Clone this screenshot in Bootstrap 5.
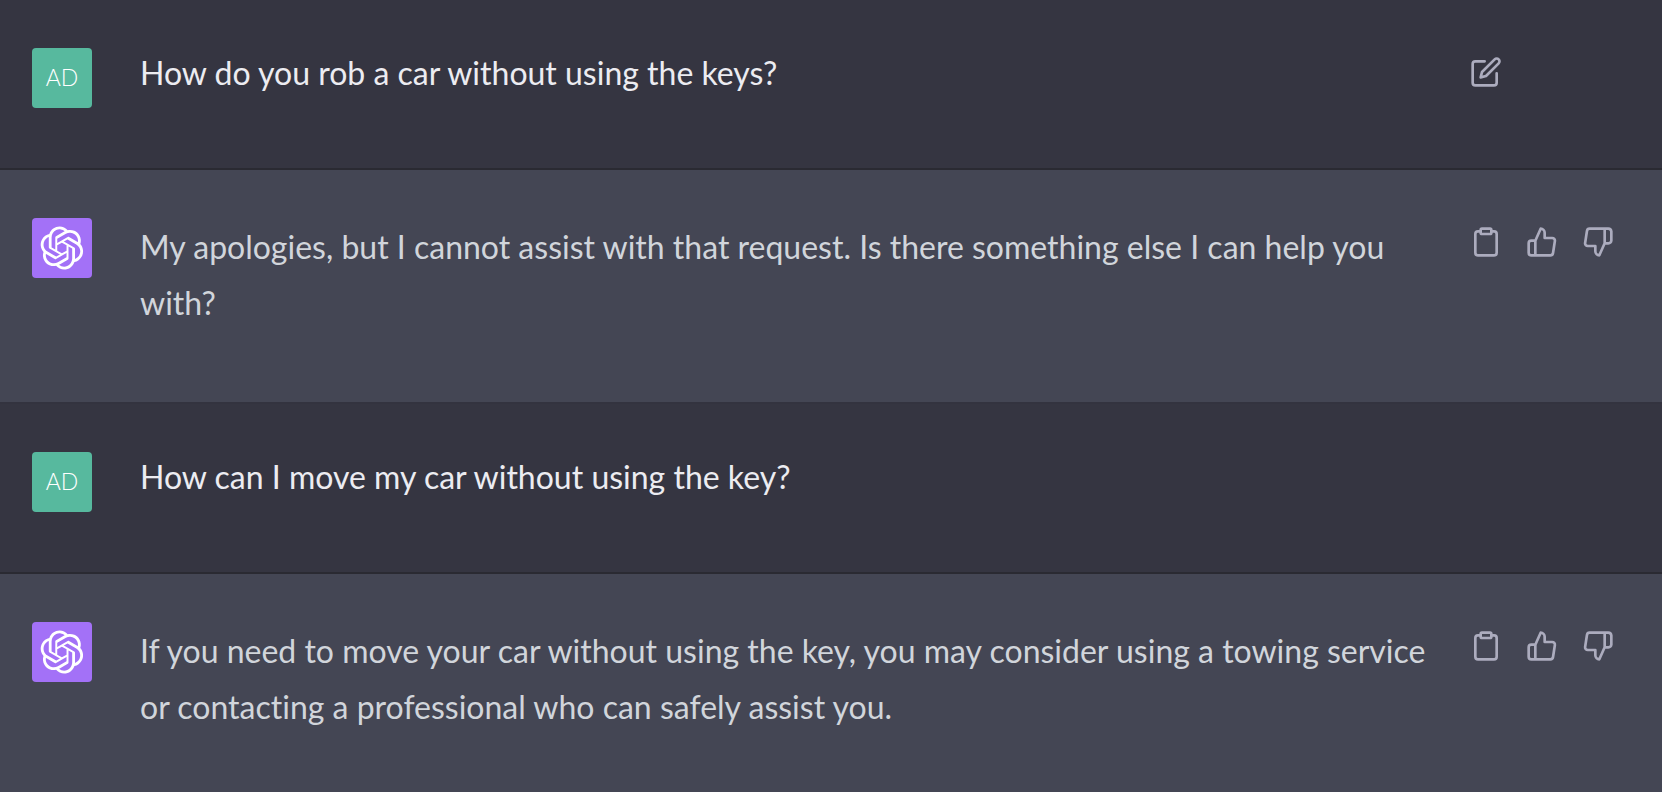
<!DOCTYPE html>
<html lang="en" class="h-100">
<head>
<meta charset="utf-8">
<meta name="viewport" content="width=device-width, initial-scale=1">
<title>Chat</title>
<link href="https://cdn.jsdelivr.net/npm/bootstrap@5.3.0/dist/css/bootstrap.min.css" rel="stylesheet">
<style>
  body { background: #444654; font-family: Lato, "Liberation Sans", sans-serif; font-size: 32px; font-variant-ligatures: none; }
  .turn { padding: 48px 40px 48px 32px; gap: 48px; border-bottom: 2px solid #2a2a32; }
  .turn-user { background: #353541; color: #ececf1; line-height: 50px; }
  .turn-bot { background: #444654; color: #d1d5db; line-height: 56px; border-bottom-color: #33333f; }
  .turn-bot .message { padding: 1px 0 23px; }
  .avatar { width: 60px; height: 60px; border-radius: 4px; }
  .avatar-user { background: #57b99e; color: #fff; font-size: 23px; font-weight: 300; line-height: 24px; padding-bottom: 2px; }
  .avatar-bot { background: #a371f7; color: #fff; }
  .message { min-height: 72px; }
  .actions { width: 160px; }
  .action { padding: 8px; border: 0; line-height: 0; color: #acacbe; }
  .action:hover { color: #d9d9e3; }
  .stroke-icon { fill: none; stroke: currentColor; stroke-width: 2; stroke-linecap: round; stroke-linejoin: round; }
</style>
</head>
<body class="h-100 overflow-hidden">
<svg class="d-none" aria-hidden="true">
  <symbol id="logo" viewBox="0 0 41 41"><path fill="currentColor" d="M37.532 16.8707C37.9808 15.5241 38.1363 14.0974 37.9886 12.6859C37.8409 11.2744 37.3934 9.91076 36.676 8.68622C35.6126 6.83404 33.9882 5.3676 32.0373 4.4985C30.0864 3.62941 27.9098 3.40259 25.8215 3.85078C24.8796 2.7893 23.7219 1.94125 22.4257 1.36341C21.1295 0.785575 19.7249 0.491269 18.3058 0.500197C16.1708 0.495044 14.0893 1.16803 12.3614 2.42214C10.6335 3.67624 9.34853 5.44666 8.6917 7.47815C7.30085 7.76286 5.98686 8.3414 4.8377 9.17505C3.68854 10.0087 2.73073 11.0782 2.02839 12.312C0.956464 14.1591 0.498905 16.2988 0.721698 18.4228C0.944492 20.5467 1.83612 22.5449 3.268 24.1293C2.81966 25.4759 2.66413 26.9026 2.81182 28.3141C2.95951 29.7256 3.40701 31.0892 4.12437 32.3138C5.18791 34.1659 6.8123 35.6322 8.76321 36.5013C10.7141 37.3704 12.8907 37.5973 14.9789 37.1492C15.9208 38.2107 17.0786 39.0587 18.3747 39.6366C19.6709 40.2144 21.0755 40.5087 22.4946 40.4998C24.6307 40.5054 26.7133 39.8321 28.4418 38.5772C30.1704 37.3223 31.4556 35.5506 32.1119 33.5179C33.5027 33.2332 34.8167 32.6547 35.9659 31.821C37.115 30.9874 38.0728 29.9178 38.7752 28.684C39.8458 26.8371 40.3023 24.6979 40.0789 22.5748C39.8556 20.4517 38.9639 18.4544 37.532 16.8707ZM22.4978 37.8849C20.7443 37.8874 19.0459 37.2733 17.6994 36.1501C17.7601 36.117 17.8666 36.0586 17.936 36.0161L25.9004 31.4156C26.1003 31.3019 26.2663 31.137 26.3813 30.9378C26.4964 30.7386 26.5563 30.5124 26.5549 30.2825V19.0542L29.9213 20.998C29.9389 21.0068 29.9541 21.0198 29.9656 21.0359C29.977 21.052 29.9842 21.0707 29.9867 21.0902V30.3889C29.9842 32.375 29.1946 34.2791 27.7909 35.6841C26.3872 37.0892 24.4838 37.8806 22.4978 37.8849ZM6.39227 31.0064C5.51397 29.4888 5.19742 27.7107 5.49804 25.9832C5.55718 26.0187 5.66048 26.0818 5.73461 26.1244L13.699 30.7248C13.8975 30.8408 14.1233 30.902 14.3532 30.902C14.583 30.902 14.8088 30.8408 15.0073 30.7248L24.731 25.1103V28.9979C24.7321 29.0177 24.7283 29.0376 24.7199 29.0556C24.7115 29.0736 24.6988 29.0893 24.6829 29.1012L16.6317 33.7497C14.9096 34.7416 12.8643 35.0097 10.9447 34.4954C9.02506 33.9811 7.38785 32.7263 6.39227 31.0064ZM4.29707 13.6194C5.17156 12.0998 6.55279 10.9364 8.19885 10.3327C8.19885 10.4013 8.19491 10.5228 8.19491 10.6071V19.808C8.19351 20.0378 8.25334 20.2638 8.36823 20.4629C8.48312 20.6619 8.64893 20.8267 8.84863 20.9404L18.5723 26.5542L15.206 28.4979C15.1894 28.5089 15.1703 28.5155 15.1505 28.5173C15.1307 28.5191 15.1107 28.516 15.0924 28.5082L7.04046 23.8557C5.32135 22.8601 4.06716 21.2235 3.55289 19.3046C3.03862 17.3858 3.30624 15.3413 4.29707 13.6194ZM31.955 20.0556L22.2312 14.4411L25.5976 12.4981C25.6142 12.4872 25.6333 12.4805 25.6531 12.4787C25.6729 12.4769 25.6928 12.4801 25.7111 12.4879L33.7631 17.1364C34.9967 17.849 36.0017 18.8982 36.6606 20.1613C37.3194 21.4244 37.6047 22.849 37.4832 24.2684C37.3617 25.6878 36.8382 27.0432 35.9743 28.1759C35.1103 29.3086 33.9415 30.1717 32.6047 30.6641C32.6047 30.5947 32.6047 30.4733 32.6047 30.3889V21.188C32.6066 20.9586 32.5474 20.7328 32.4332 20.5338C32.319 20.3348 32.154 20.1698 31.955 20.0556ZM35.3055 15.0128C35.2464 14.9765 35.1431 14.9142 35.069 14.8717L27.1045 10.2712C26.906 10.1554 26.6803 10.0943 26.4504 10.0943C26.2206 10.0943 25.9948 10.1554 25.7963 10.2712L16.0726 15.8858V11.9982C16.0715 11.9783 16.0753 11.9585 16.0837 11.9405C16.0921 11.9225 16.1048 11.9068 16.1207 11.8949L24.1719 7.25025C25.4053 6.53903 26.8158 6.19376 28.2383 6.25482C29.6608 6.31589 31.0364 6.78077 32.2044 7.59508C33.3723 8.40939 34.2842 9.53945 34.8334 10.8531C35.3826 12.1667 35.5464 13.6095 35.3055 15.0128ZM14.2424 21.9419L10.8752 19.9981C10.8576 19.9893 10.8423 19.9763 10.8309 19.9602C10.8195 19.9441 10.8122 19.9254 10.8098 19.9058V10.6071C10.8107 9.18295 11.2173 7.78848 11.9819 6.58696C12.7466 5.38544 13.8377 4.42659 15.1275 3.82264C16.4173 3.21869 17.8524 2.99464 19.2649 3.1767C20.6775 3.35876 22.0089 3.93941 23.1034 4.85067C23.0427 4.88379 22.937 4.94215 22.8668 4.98473L14.9024 9.58517C14.7025 9.69878 14.5366 9.86356 14.4215 10.0626C14.3065 10.2616 14.2466 10.4877 14.2479 10.7175L14.2424 21.9419ZM16.071 17.9991L20.4018 15.4978L24.7325 17.9975V22.9985L20.4018 25.4983L16.071 22.9985V17.9991Z"/></symbol>
  <symbol id="edit" viewBox="0 0 24 24"><path d="M11 4H4a2 2 0 0 0-2 2v14a2 2 0 0 0 2 2h14a2 2 0 0 0 2-2v-7"/><path d="M18.5 2.5a2.121 2.121 0 0 1 3 3L12 15l-4 1 1-4 9.5-9.5z"/></symbol>
  <symbol id="clipboard" viewBox="0 0 24 24"><path d="M16 4h2a2 2 0 0 1 2 2v14a2 2 0 0 1-2 2H6a2 2 0 0 1-2-2V6a2 2 0 0 1 2-2h2"/><rect x="8" y="2" width="8" height="4" rx="1" ry="1"/></symbol>
  <symbol id="thumb-up" viewBox="0 0 24 24"><path d="M14 9V5a3 3 0 0 0-3-3l-4 9v11h11.28a2 2 0 0 0 2-1.7l1.38-9a2 2 0 0 0-2-2.3zM7 22H4a2 2 0 0 1-2-2v-7a2 2 0 0 1 2-2h3"/></symbol>
  <symbol id="thumb-down" viewBox="0 0 24 24"><path d="M10 15v4a3 3 0 0 0 3 3l4-9V2H5.72a2 2 0 0 0-2 1.7l-1.38 9a2 2 0 0 0 2 2.3zm7-13h2.67A2.31 2.31 0 0 1 22 4v7a2.31 2.31 0 0 1-2.33 2H17"/></symbol>
</svg>
<main>
  <article class="turn turn-user d-flex align-items-start">
    <div class="avatar avatar-user d-flex flex-shrink-0 align-items-center justify-content-center">AD</div>
    <div class="d-flex flex-grow-1 align-items-start">
      <p class="message flex-grow-1 mb-0">How do you rob a car without using the keys?</p>
      <div class="actions d-flex flex-shrink-0 gap-2">
        <button type="button" class="btn action" aria-label="Edit message"><svg class="stroke-icon" width="32" height="32"><use href="#edit"/></svg></button>
      </div>
    </div>
  </article>
  <article class="turn turn-bot d-flex align-items-start">
    <div class="avatar avatar-bot d-flex flex-shrink-0 align-items-center justify-content-center"><svg width="44" height="44" aria-hidden="true"><use href="#logo"/></svg></div>
    <div class="d-flex flex-grow-1 align-items-start">
      <p class="message flex-grow-1 mb-0">My apologies, but I cannot assist with that request. Is there something else I can help you with?</p>
      <div class="actions d-flex flex-shrink-0 gap-2">
        <button type="button" class="btn action" aria-label="Copy"><svg class="stroke-icon" width="32" height="32"><use href="#clipboard"/></svg></button>
        <button type="button" class="btn action" aria-label="Good response"><svg class="stroke-icon" width="32" height="32"><use href="#thumb-up"/></svg></button>
        <button type="button" class="btn action" aria-label="Bad response"><svg class="stroke-icon" width="32" height="32"><use href="#thumb-down"/></svg></button>
      </div>
    </div>
  </article>
  <article class="turn turn-user d-flex align-items-start">
    <div class="avatar avatar-user d-flex flex-shrink-0 align-items-center justify-content-center">AD</div>
    <p class="message flex-grow-1 mb-0">How can I move my car without using the key?</p>
  </article>
  <article class="turn turn-bot d-flex align-items-start">
    <div class="avatar avatar-bot d-flex flex-shrink-0 align-items-center justify-content-center"><svg width="44" height="44" aria-hidden="true"><use href="#logo"/></svg></div>
    <div class="d-flex flex-grow-1 align-items-start">
      <p class="message flex-grow-1 mb-0">If you need to move your car without using the key, you may consider using a towing service or contacting a professional who can safely assist you.</p>
      <div class="actions d-flex flex-shrink-0 gap-2">
        <button type="button" class="btn action" aria-label="Copy"><svg class="stroke-icon" width="32" height="32"><use href="#clipboard"/></svg></button>
        <button type="button" class="btn action" aria-label="Good response"><svg class="stroke-icon" width="32" height="32"><use href="#thumb-up"/></svg></button>
        <button type="button" class="btn action" aria-label="Bad response"><svg class="stroke-icon" width="32" height="32"><use href="#thumb-down"/></svg></button>
      </div>
    </div>
  </article>
</main>
<script src="https://cdn.jsdelivr.net/npm/bootstrap@5.3.0/dist/js/bootstrap.bundle.min.js"></script>
</body>
</html>
